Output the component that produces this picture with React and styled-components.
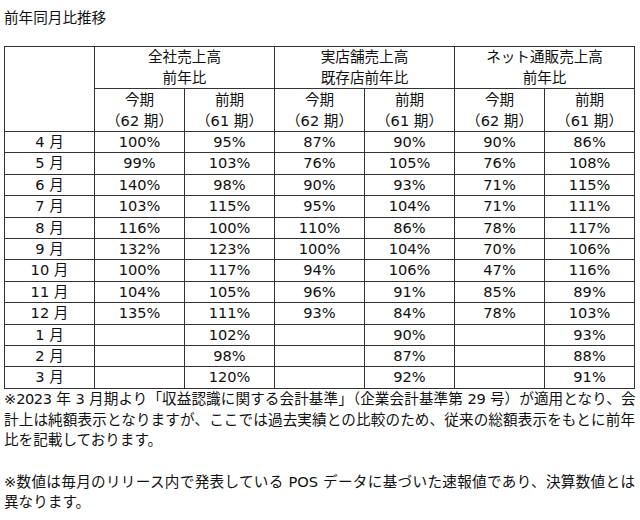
import React from "react";
import styled, { createGlobalStyle } from "styled-components";

const GlobalStyle = createGlobalStyle`
  html, body { margin: 0; padding: 0; background: #fff; }
  body {
    font-family: "DejaVu Sans", "Noto Sans CJK JP", sans-serif;
    font-size: 14.6px;
    color: #111;
  }
`;

const Page = styled.div`
  padding: 7px 0 0 4px;
  width: 631px;
`;

const Title = styled.div`
  line-height: 21px;
  margin-bottom: 18px;
`;

const Table = styled.table`
  border-collapse: collapse;
  table-layout: fixed;
  width: 631px;
  border: 1px solid #222;
`;

const Col = styled.col`
  width: 90px;
`;

const Cell = styled.td`
  border: 1px solid #333;
  padding: 0;
  text-align: center;
  vertical-align: middle;
  white-space: nowrap;
  font-weight: normal;
  line-height: ${(p) => p.$lh || "20.4px"};
`;

const Notes = styled.div`
  width: 631px;
  line-height: 20.7px;
`;

const NoteLine = styled.div`
  text-align: justify;
  text-align-last: ${(p) => (p.$full ? "justify" : "left")};
  white-space: ${(p) => (p.$full ? "nowrap" : "normal")};
  letter-spacing: ${(p) => p.$ls || "0"};
  min-height: 20.7px;
`;

const rows = [
  ["4 月", "100%", "95%", "87%", "90%", "90%", "86%"],
  ["5 月", "99%", "103%", "76%", "105%", "76%", "108%"],
  ["6 月", "140%", "98%", "90%", "93%", "71%", "115%"],
  ["7 月", "103%", "115%", "95%", "104%", "71%", "111%"],
  ["8 月", "116%", "100%", "110%", "86%", "78%", "117%"],
  ["9 月", "132%", "123%", "100%", "104%", "70%", "106%"],
  ["10 月", "100%", "117%", "94%", "106%", "47%", "116%"],
  ["11 月", "104%", "105%", "96%", "91%", "85%", "89%"],
  ["12 月", "135%", "111%", "93%", "84%", "78%", "103%"],
  ["1 月", "", "102%", "", "90%", "", "93%"],
  ["2 月", "", "98%", "", "87%", "", "88%"],
  ["3 月", "", "120%", "", "92%", "", "91%"],
];

const groups = [
  ["全社売上高", "前年比"],
  ["実店舗売上高", "既存店前年比"],
  ["ネット通販売上高", "前年比"],
];

export default function App() {
  return (
    <>
      <GlobalStyle />
      <Page>
        <Title>前年同月比推移</Title>
        <Table>
          <colgroup>
            {Array.from({ length: 7 }).map((_, i) => (
              <Col key={i} />
            ))}
          </colgroup>
          <thead>
            <tr>
              <Cell as="th" rowSpan={2} $lh="20.75px"></Cell>
              {groups.map((g, i) => (
                <Cell as="th" key={i} colSpan={2} $lh="20.5px">
                  {g[0]}
                  <br />
                  {g[1]}
                </Cell>
              ))}
            </tr>
            <tr>
              {groups.map((_, i) => (
                <React.Fragment key={i}>
                  <Cell as="th" $lh="21px">
                    今期
                    <br />
                    （62 期）
                  </Cell>
                  <Cell as="th" $lh="21px">
                    前期
                    <br />
                    （61 期）
                  </Cell>
                </React.Fragment>
              ))}
            </tr>
          </thead>
          <tbody>
            {rows.map((r) => (
              <tr key={r[0]}>
                {r.map((v, j) => (
                  <Cell key={j}>{v}</Cell>
                ))}
              </tr>
            ))}
          </tbody>
        </Table>
        <Notes>
          <NoteLine $full $ls="-0.5px">
            ※2023 年 3 月期より「収益認識に関する会計基準」（企業会計基準第 29 号）が適用となり、会
          </NoteLine>
          <NoteLine $full>
            計上は純額表示となりますが、ここでは過去実績との比較のため、従来の総額表示をもとに前年
          </NoteLine>
          <NoteLine>比を記載しております。</NoteLine>
          <NoteLine />
          <NoteLine $full>
            ※数値は毎月のリリース内で発表している POS データに基づいた速報値であり、決算数値とは
          </NoteLine>
          <NoteLine>異なります。</NoteLine>
        </Notes>
      </Page>
    </>
  );
}
